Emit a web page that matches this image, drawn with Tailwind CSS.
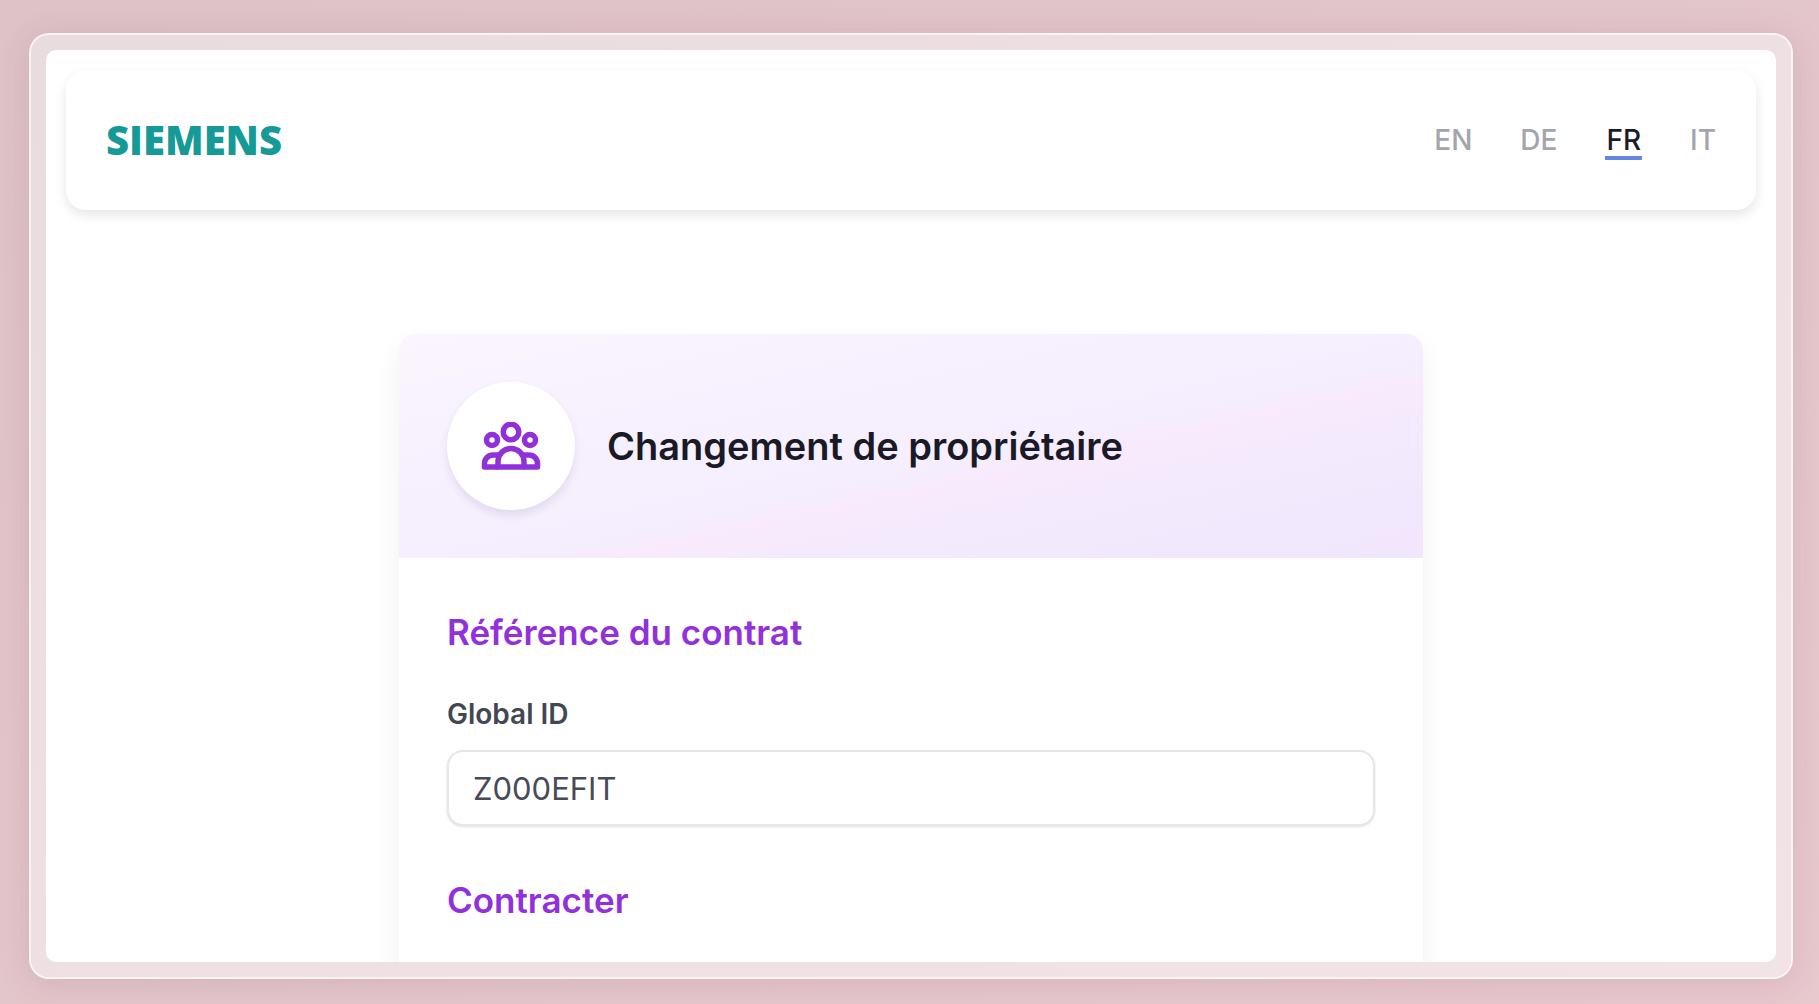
<!DOCTYPE html>
<html lang="fr">
<head>
  <meta charset="UTF-8" />
  <meta name="viewport" content="width=device-width, initial-scale=1.0" />
  <title>Changement de propriétaire</title>
  <script src="https://cdn.jsdelivr.net/npm/@tailwindcss/browser@4"></script>
</head>
<body class="h-dvh overflow-hidden bg-linear-to-br from-[#dec2c7] to-[#e8c9ce] font-['Inter',sans-serif]">
  <div class="h-full pt-[33px] pr-[26px] pb-[25px] pl-[29px]">

    <!-- glass frame -->
    <div class="h-full rounded-[20px] border-2 border-white/80 bg-linear-to-br from-[#e9dcdf] to-[#f2e3e6] bg-clip-padding p-[15px] shadow-[0_4px_32px_rgba(120,60,90,0.15)]">
      <div class="h-full overflow-hidden rounded-[10px] bg-white px-5 pt-5">

        <!-- header -->
        <header class="flex h-35 items-center justify-between rounded-[20px] bg-white px-10 shadow-[0_5px_12px_rgba(0,0,0,0.10)]">
          <a href="#" class="font-['Open_Sans',sans-serif] text-[40px] font-extrabold leading-none text-[#159a97]">SIEMENS</a>
          <nav class="flex items-center gap-12 text-[28px] font-medium leading-8 text-[#a3a5ad]">
            <a href="#">EN</a>
            <a href="#">DE</a>
            <a href="#" class="border-y-4 border-t-transparent border-b-[#6285e6] px-px text-[#1c1c28]">FR</a>
            <a href="#">IT</a>
          </nav>
        </header>

        <!-- form card -->
        <main class="mx-auto mt-[124px] max-w-5xl rounded-2xl bg-white shadow-[0_12px_28px_rgba(0,0,0,0.06)]">
          <div class="flex items-center gap-8 rounded-t-2xl bg-[linear-gradient(to_bottom_right,#faf5ff,#f4eefe_55%,#f8eafc_61%,#f3eafd_71%,#f1e6fd)] p-12">
            <div class="flex size-32 items-center justify-center rounded-full bg-white shadow-[0_5px_8px_rgba(60,30,90,0.10)]">
              <!-- people icon -->
              <svg class="h-12 w-15" viewBox="0 0 60 48" fill="none" stroke="#9130d8" stroke-width="5.500" stroke-linejoin="round">
                <circle cx="30" cy="10" r="7.800" />
                <circle cx="11" cy="18" r="5.500" />
                <circle cx="49" cy="18" r="5.500" />
                <path d="M17 45V39.500a13 13 0 0 1 26 0V45z" />
                <path d="M19 33h-7a8.500 8.500 0 0 0-8.500 8.500V45H17" />
                <path d="M41 33h7a8.500 8.500 0 0 1 8.500 8.500V45H43" />
              </svg>
            </div>
            <h1 class="text-[38px] font-semibold leading-12 text-[#1a1a27]">Changement de propriétaire</h1>
          </div>

          <form class="px-12 pt-[46px]">
            <h2 class="text-[35px] font-semibold leading-14 text-[#9230dc]">Référence du contrat</h2>
            <label for="global-id" class="mt-[34px] block text-[28px] font-semibold leading-10 text-[#414753]">Global ID</label>
            <input id="global-id" type="text" value="Z000EFIT" class="mt-4 block h-19 w-full rounded-2xl border-2 border-gray-200 bg-white px-6 text-[31px] text-[#474b57] shadow-sm" />
            <h2 class="mt-[46px] text-[35px] font-semibold leading-14 text-[#9230dc]">Contracter</h2>
            <div class="h-24"></div>
          </form>
        </main>

      </div>
    </div>
  </div>
</body>
</html>
